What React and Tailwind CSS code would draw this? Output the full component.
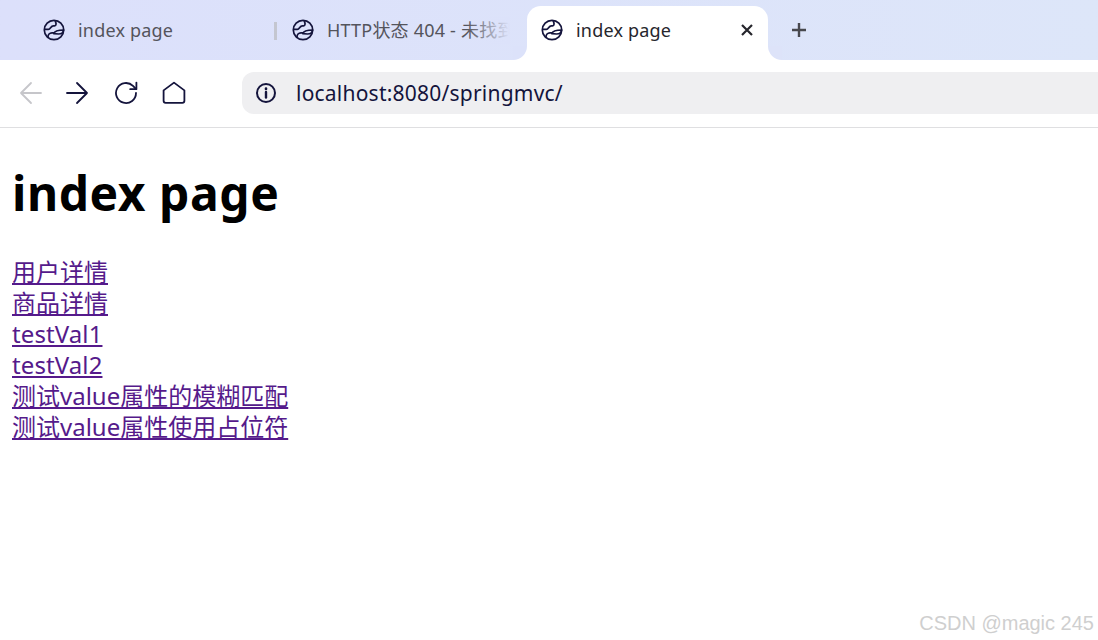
const uiFont = 'font-["Noto_Sans","Noto_Sans_CJK_SC",sans-serif]';

function Globe() {
  return (
    <svg width="22" height="22" viewBox="0 0 22 22" fill="none" stroke="#14143c" strokeWidth="1.7" strokeLinecap="round" strokeLinejoin="round" className="shrink-0">
      <circle cx="11" cy="11" r="9.7" />
      <path d="M1.8 10.4h3.6c2.2 0 2.2-3.6 5-3.6h1.2c1.8 0 1.8-2.4.6-5" />
      <path d="M5 18.4c-.2-2.8 1.6-4.6 4-4.6h1.6" />
      <path d="M10.8 14.6c1-3 4.8-3.6 9.8-3.6-.4 3-2.2 4-5 4z" />
    </svg>
  );
}

// background tab
function Tab({ title, className, fade }) {
  return (
    <div className={`flex items-center gap-[13px] h-full ${className}`}>
      <Globe />
      <span className={`relative text-[18px] tracking-[0.2px] whitespace-nowrap overflow-hidden text-[#54545c] ${fade ? 'w-[183px]' : ''}`}>
        {title}
        {fade && <span className="absolute right-0 top-0 bottom-0 w-[44px] bg-linear-to-r from-transparent to-[#dce2fa]" />}
      </span>
    </div>
  );
}

function NavIcon({ children, color = '#14143c' }) {
  return (
    <svg width="26" height="26" viewBox="0 0 26 26" fill="none" stroke={color} strokeWidth="1.8" strokeLinecap="round" strokeLinejoin="round">
      {children}
    </svg>
  );
}

export default function App() {
  return (
    <div className={`relative w-[1098px] h-[640px] overflow-hidden bg-white ${uiFont}`}>
      {/* tab strip */}
      <div className="flex h-[60px] bg-linear-to-r from-[#dce0fb] to-[#dde6f9]">
        <Tab title="index page" className="w-[274px] pl-[43px]" />
        <div className="w-[3px] h-[18px] mt-[22px] bg-[#c4c6d0]" />
        <Tab title="HTTP状态 404 - 未找到" className="w-[250px] pl-[15px]" fade />
        <div className="relative flex items-center w-[241px] h-[54px] mt-[6px] pb-[6px] rounded-t-[14px] bg-white pl-[14px] gap-[13px]">
          <span className="absolute -left-[14px] bottom-0 size-[14px] bg-white">
            <span className="block size-full rounded-br-[14px] bg-[#dce2fa]" />
          </span>
          <Globe />
          <span className="text-[18px] tracking-[0.2px] text-[#26262c]">index page</span>
          <svg width="12" height="12" viewBox="0 0 12 12" stroke="#26262c" strokeWidth="2.2" className="absolute right-[15px] top-[18px]">
            <path d="M1 1l10 10M11 1L1 11" />
          </svg>
          <span className="absolute -right-[14px] bottom-0 size-[14px] bg-white">
            <span className="block size-full rounded-bl-[14px] bg-[#dde3f9]" />
          </span>
        </div>
        <svg width="16" height="16" viewBox="0 0 16 16" stroke="#48484e" strokeWidth="2.4" className="ml-[23px] mt-[22px]">
          <path d="M8 1v14M1 8h14" />
        </svg>
      </div>

      {/* toolbar */}
      <div className="relative z-10 flex items-center h-[68px] pb-[1px] pl-[18px] bg-white rounded-tl-[14px] border-b border-[#dfdfe1]">
        <div className="flex items-center">
          <NavIcon color="#c6c6ca">
            <path d="M23 13H3M13 3L3 13l10 10" />
          </NavIcon>
          <span className="ml-[20px]">
            <NavIcon>
              <path d="M3 13h20M13 3l10 10-10 10" />
            </NavIcon>
          </span>
          <span className="ml-[24px]">
            <NavIcon>
              <path d="M22 13a10 10 0 1 1-3-7.1L22 9" />
              <path d="M22.4 2.6V9.2h-6.2" />
            </NavIcon>
          </span>
          <span className="ml-[21px]">
            <NavIcon>
              <path d="M13 2.6L2.6 10.4v10.4a2 2 0 0 0 2 2h16.8a2 2 0 0 0 2-2V10.4z" />
            </NavIcon>
          </span>
        </div>
        <div className="flex items-center flex-1 h-[42px] ml-[55px] pl-[13px] rounded-l-[12px] bg-[#efeff1]">
          <svg width="22" height="22" viewBox="0 0 22 22" fill="none" stroke="#14143c" strokeWidth="2" strokeLinecap="round">
            <circle cx="11" cy="11" r="9" />
            <path d="M11 10v5.5" strokeWidth="2.4" />
            <path d="M11 6.6v.3" strokeWidth="2.6" />
          </svg>
          <span className="ml-[19px] text-[21px] tracking-[0.22px] text-[#14143c] translate-y-[1px]">localhost:8080/springmvc/</span>
        </div>
      </div>

      {/* page */}
      <div className="px-[12px]">
        <h1 className="mt-[32px] mb-[30px] text-[48px] leading-[66px] tracking-[0.55px] font-bold text-black">index page</h1>
        <div className="flex flex-col items-start text-[24px] leading-[31px] text-[#551a8b]">
          <a className="underline">用户详情</a>
          <a className="underline">商品详情</a>
          <a className="underline tracking-[0.1px]">testVal1</a>
          <a className="underline tracking-[0.1px]">testVal2</a>
          <a className="underline">测试value属性的模糊匹配</a>
          <a className="underline">测试value属性使用占位符</a>
        </div>
      </div>

      <span className='absolute right-[4px] bottom-[4px] font-["Liberation_Sans",sans-serif] text-[20px] leading-[26px] text-[#cfcfcf]'>
        CSDN @magic 245
      </span>
    </div>
  );
}
